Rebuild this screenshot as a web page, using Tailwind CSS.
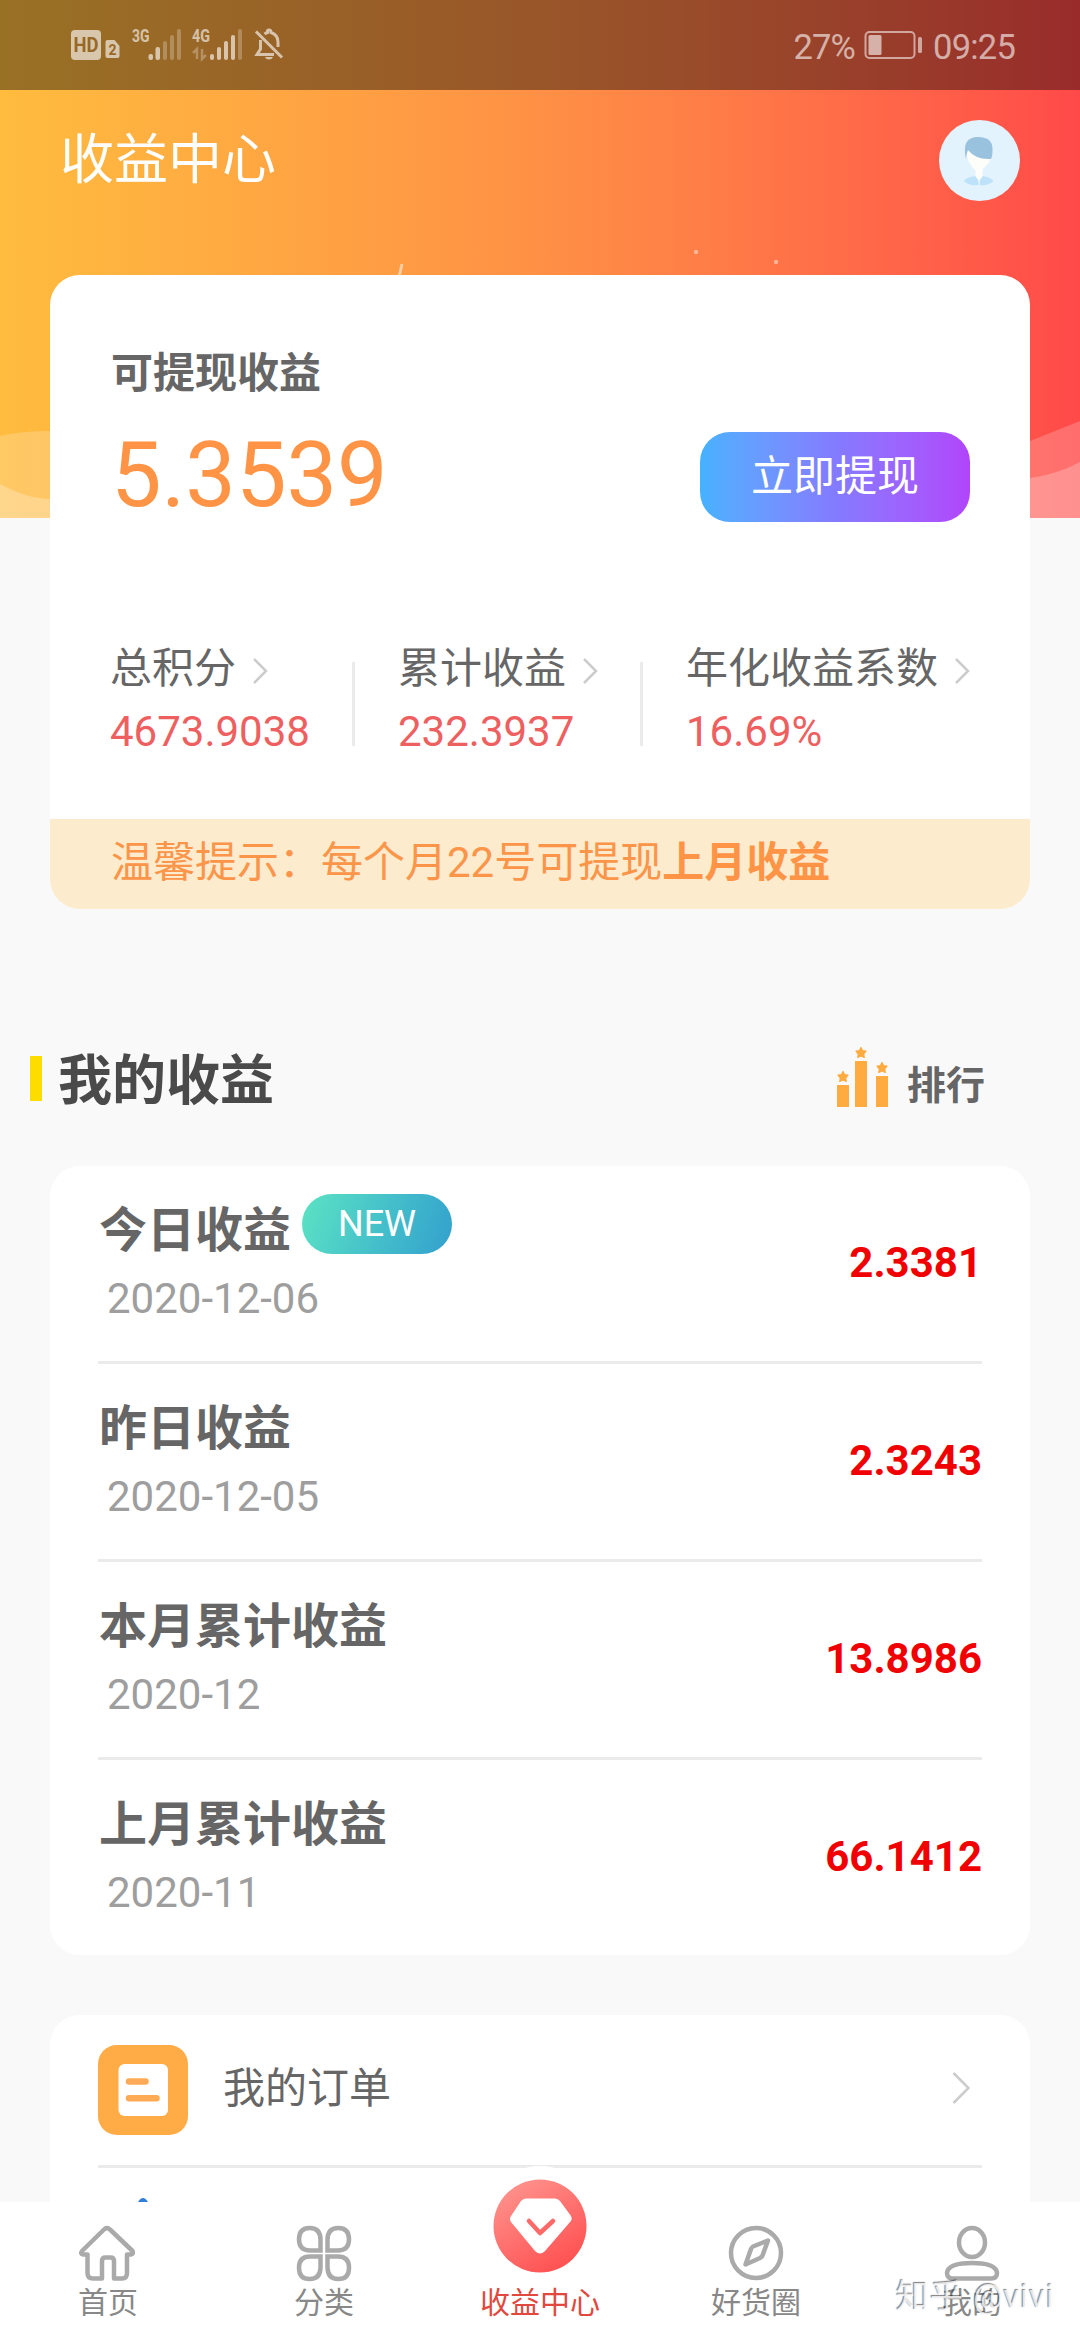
<!DOCTYPE html>
<html lang="zh-CN">
<head>
<meta charset="utf-8">
<title>收益中心</title>
<script src="https://cdn.jsdelivr.net/npm/@tailwindcss/browser@4"></script>
</head>
<body class="w-[1080px] h-[2340px] overflow-hidden bg-[#f9f9f9] font-[Roboto,'Noto_Sans_CJK_SC',sans-serif] text-[42px] leading-[60px] text-[#666]">
<div class="relative flex h-[2340px] w-[1080px] flex-col overflow-hidden">

  <!-- header backdrop -->
  <div class="absolute inset-x-0 top-0 h-[518px] bg-linear-to-r from-[#ffbc3e] via-[#ff9045] to-[#ff4949]">
    <svg class="block" width="1080" height="518" viewBox="0 0 1080 518">
      <path d="M0 436Q22 431 50 431V518H0Z" fill="#fff" fill-opacity=".2"/>
      <path d="M0 484Q28 499 50 499V518H0Z" fill="#fff" fill-opacity=".26"/>
      <path d="M1030 441L1080 421V518H1030Z" fill="#fff" fill-opacity=".2"/>
      <path d="M1030 478Q1058 474 1080 462V518H1030Z" fill="#fff" fill-opacity=".24"/>
      <path d="M402 264L399 277" stroke="#fff" stroke-opacity=".5" stroke-width="3"/>
      <circle cx="696" cy="252" r="2.2" fill="#fff" fill-opacity=".45"/>
      <circle cx="776" cy="262" r="2.2" fill="#fff" fill-opacity=".45"/>
    </svg>
  </div>

  <!-- status bar -->
  <div class="relative flex h-[90px] shrink-0 items-center justify-between bg-black/40 pl-[70px] pr-[65px]">
    <svg width="220" height="40" viewBox="70 26 220 40" fill="#fff" fill-opacity=".62">
      <path fill-rule="evenodd" d="M75 31H97Q101 31 101 35V57Q101 61 97 61H75Q71 61 71 57V35Q71 31 75 31Z"/>
      <text x="73.5" y="53" font-family="Roboto" font-size="20" font-weight="700" fill="#986826" fill-opacity="1" textLength="25" lengthAdjust="spacingAndGlyphs">HD</text>
      <path d="M107.500 41H114.500L119.500 47V57Q119.500 59 117.500 59H107.500Q105.500 59 105.500 57V43Q105.500 41 107.500 41Z"/>
      <text x="108.500" y="55.500" font-family="Roboto" font-size="14" font-weight="700" fill="#986826" fill-opacity="1">2</text>
      <text x="132" y="43" font-family="Roboto" font-size="19" font-weight="700" textLength="17.500" lengthAdjust="spacingAndGlyphs">3G</text>
      <rect x="148.500" y="55" width="4.500" height="6" rx="2"/><rect x="155.500" y="48" width="4.500" height="13" rx="2"/>
      <g fill-opacity=".25"><rect x="163" y="42" width="4" height="19" rx="2"/><rect x="170" y="36" width="4" height="25" rx="2"/><rect x="177" y="30" width="4" height="31" rx="2"/></g>
      <text x="192" y="43" font-family="Roboto" font-size="19" font-weight="700" textLength="18" lengthAdjust="spacingAndGlyphs">4G</text>
      <path d="M193 54L197 50V60M202 50V60L206 56" fill="none" stroke="#fff" stroke-opacity=".28" stroke-width="2.500"/>
      <rect x="210" y="55" width="4" height="6" rx="2"/><rect x="217" y="48" width="4" height="13" rx="2"/><rect x="224" y="42" width="4" height="19" rx="2"/><rect x="231" y="36" width="4" height="25" rx="2"/>
      <rect x="238" y="30" width="4" height="31" rx="2" fill-opacity=".25"/>
      <g fill="none" stroke="#fff" stroke-opacity=".62" stroke-width="3">
        <path d="M256 32.500L282 58.500" />
        <path d="M260.500 41V50L257 55.500H274"/>
        <path d="M264.500 35Q266 34 267.500 33.500Q267 31 269 31Q271 31 271 33.500Q278 36 278 43V48"/>
      </g>
      <path d="M265 58H273Q272 60.500 269 60.500Q266 60.500 265 58Z"/>
    </svg>
    <div class="flex items-center text-[34.5px] leading-[42px] tracking-[-0.8px] text-white/60">
      <span class="mt-[3px]">27%</span>
      <svg class="ml-[9px] mr-[9px]" width="60" height="30" viewBox="0 0 60 30"><rect x="1.500" y="2" width="49" height="26" rx="4" fill="none" stroke="#fff" stroke-opacity=".55" stroke-width="2"/><rect x="4.500" y="5" width="13" height="20" rx="1.500" fill="#fff" fill-opacity=".6"/><rect x="54" y="7" width="4" height="16" rx="1.500" fill="#fff" fill-opacity=".55"/></svg>
      <span class="mt-[3px]">09:25</span>
    </div>
  </div>

  <!-- title bar -->
  <div class="relative flex h-[185px] shrink-0 items-start justify-between pl-[60px] pr-[60px] pt-[30px]">
    <h1 class="mt-[3px] text-[54px] leading-[76px] text-white">收益中心</h1>
    <svg width="81" height="81" viewBox="0 0 81 81">
      <circle cx="40.500" cy="40.500" r="40.500" fill="#e3f3fe"/>
      <path d="M27 30Q28 42 35 49Q39 54 44 49Q52 42 52.500 34Z" fill="#fdfdfa"/>
      <path d="M36.500 47H43.500V57L40 63L36.500 57Z" fill="#fdfdfa"/>
      <path d="M27 39Q22 17 39 17Q55 17 53.500 32Q53.400 37 52 39Q37 40 29 30Q27.500 33 27 39Z" fill="#98c2de"/>
      <path d="M24.500 61Q28 57 36 56L39.500 60V65Q29 66 24.500 61ZM54.500 61Q51 57 44 56L40.800 60V65Q50 66 54.500 61Z" fill="#bfe2fb"/>
    </svg>
  </div>

  <!-- balance card -->
  <section class="relative mx-[50px] h-[634px] shrink-0 overflow-hidden rounded-[30px] bg-white">
    <div class="flex h-[375px] items-start justify-between pl-[61px] pr-[60px] pt-[67px]">
      <div class="flex flex-col">
        <h2 class="mt-[2px] font-bold">可提现收益</h2>
        <div class="mt-[19px] text-[90px] leading-[106px] text-[#ff9446]">5.3539</div>
      </div>
      <button class="mt-[90px] h-[90px] w-[270px] rounded-[30px] bg-linear-to-r from-[#45b2ff] via-[#837bff] to-[#b144fb] text-white">立即提现</button>
    </div>
    <div class="flex h-[169px] pl-[60px]">
      <div class="-mt-[11px] flex w-[288px] flex-col">
        <div class="flex items-center gap-[16px]"><span>总积分</span><svg class="mt-[4px]" width="16" height="26" viewBox="0 0 16 26" fill="none" stroke="#ccc" stroke-width="2.500"><path d="M2 1L14 13L2 25"/></svg></div>
        <div class="mt-[3px] text-[#ee5f5f]">4673.9038</div>
      </div>
      <div class="-mt-[11px] flex w-[288px] flex-col">
        <div class="flex items-center gap-[16px]"><span>累计收益</span><svg class="mt-[4px]" width="16" height="26" viewBox="0 0 16 26" fill="none" stroke="#ccc" stroke-width="2.500"><path d="M2 1L14 13L2 25"/></svg></div>
        <div class="mt-[3px] text-[#ee5f5f]">232.3937</div>
      </div>
      <div class="-mt-[11px] flex flex-col">
        <div class="flex items-center gap-[16px]"><span>年化收益系数</span><svg class="mt-[4px]" width="16" height="26" viewBox="0 0 16 26" fill="none" stroke="#ccc" stroke-width="2.500"><path d="M2 1L14 13L2 25"/></svg></div>
        <div class="mt-[3px] text-[#ee5f5f]">16.69%</div>
      </div>
    </div>
    <i class="absolute left-[302px] top-[387px] h-[84px] w-[3px] bg-[#ebebeb]"></i>
    <i class="absolute left-[590px] top-[387px] h-[84px] w-[3px] bg-[#ebebeb]"></i>
    <p class="h-[90px] bg-[#fdebce] pl-[61px] pt-[14px] text-[#fb9549]">温馨提示：每个月22号可提现<b class="text-[#ff9446]">上月收益</b></p>
  </section>

  <!-- section heading -->
  <div class="relative flex h-[257px] shrink-0 items-start pl-[30px] pr-[95px] pt-[132px]">
    <i class="mt-[15px] h-[45px] w-[12px] bg-[#fddc00]"></i>
    <h2 class="ml-[16px] mt-[3px] text-[54px] font-bold leading-[76px] text-[#4a4a4a]">我的收益</h2>
    <svg class="ml-auto mt-[6px]" width="54" height="60" viewBox="0 0 54 60" fill="#ffab40">
      <rect x="1" y="38" width="12" height="22"/><rect x="19" y="14" width="12" height="46"/><rect x="40" y="29" width="12" height="31"/>
      <path id="star" d="M25 .5L26.700 3.700L30 4.200L27.700 7L28.300 10.500L25 9L21.700 10.500L22.300 7L20 4.200L23.300 3.700Z" stroke="#ffab40" stroke-width="1.200" stroke-linejoin="round"/>
      <use href="#star" x="-18" y="24"/><use href="#star" x="21" y="15"/>
    </svg>
    <span class="ml-[17px] mt-[17px] text-[39px] font-bold leading-[56px]">排行</span>
  </div>

  <!-- earnings list -->
  <section class="relative mx-[50px] shrink-0 rounded-[30px] bg-white px-[48px]">
    <div class="flex h-[198px] items-center justify-between border-b-[3px] border-[#ebebeb]">
      <div class="flex h-full flex-col pt-[28px]">
        <div class="flex items-start"><h3 class="ml-[1px] mt-[3px] text-[48px] font-bold leading-[68px]">今日收益</h3><span class="ml-[11px] h-[60px] w-[150px] rounded-full bg-linear-110 from-[#5ce3c3] to-[#33a0cd] text-center text-[36px] leading-[60px] text-white">NEW</span></div>
        <div class="ml-[9px] mt-[4px] text-[#9e9e9e]">2020-12-06</div>
      </div>
      <b class="-mt-[2px] text-[#f00000]">2.3381</b>
    </div>
    <div class="flex h-[198px] items-center justify-between border-b-[3px] border-[#ebebeb]">
      <div class="flex h-full flex-col pt-[28px]">
        <h3 class="ml-[1px] mt-[3px] text-[48px] font-bold leading-[68px]">昨日收益</h3>
        <div class="ml-[9px] mt-[4px] text-[#9e9e9e]">2020-12-05</div>
      </div>
      <b class="-mt-[2px] text-[#f00000]">2.3243</b>
    </div>
    <div class="flex h-[198px] items-center justify-between border-b-[3px] border-[#ebebeb]">
      <div class="flex h-full flex-col pt-[28px]">
        <h3 class="ml-[1px] mt-[3px] text-[48px] font-bold leading-[68px]">本月累计收益</h3>
        <div class="ml-[9px] mt-[4px] text-[#9e9e9e]">2020-12</div>
      </div>
      <b class="-mt-[2px] text-[#f00000]">13.8986</b>
    </div>
    <div class="flex h-[195px] items-center justify-between">
      <div class="flex h-full flex-col pt-[28px]">
        <h3 class="ml-[1px] mt-[3px] text-[48px] font-bold leading-[68px]">上月累计收益</h3>
        <div class="ml-[9px] mt-[4px] text-[#9e9e9e]">2020-11</div>
      </div>
      <b class="-mt-[2px] text-[#f00000]">66.1412</b>
    </div>
  </section>

  <!-- menu list -->
  <section class="relative mx-[50px] mt-[60px] h-[187px] shrink-0 overflow-hidden rounded-t-[30px] bg-white px-[48px]">
    <div class="flex h-[153px] items-center border-b-[3px] border-[#ebebeb]">
      <svg width="90" height="90" viewBox="0 0 90 90"><rect width="90" height="90" rx="19" fill="#ffab46"/><rect x="20.500" y="19" width="49.500" height="52" rx="6" fill="#fff"/><path d="M31 36.500H47.500M31 53.300H58.500" stroke="#ffab55" stroke-width="6.500" stroke-linecap="round"/></svg>
      <span class="-mt-[2px] ml-[35px]">我的订单</span>
      <svg class="-mt-[5px] ml-auto mr-[12px]" width="18" height="32" viewBox="0 0 18 32" fill="none" stroke="#ccc" stroke-width="2.500"><path d="M1.500 1L16.500 16L1.500 31"/></svg>
    </div>
    <svg class="ml-[40px] mt-[30px] block" width="10" height="4" viewBox="0 0 10 4"><path d="M0 4Q5 -4 10 4Z" fill="#2f7fd6"/></svg>
  </section>

  <!-- tab bar -->
  <nav class="relative grid h-[138px] shrink-0 grid-cols-5 bg-white text-center text-[30px] leading-[44px] text-[#888]">
    <a class="flex flex-col items-center pt-[22px]">
      <svg width="60" height="58" viewBox="0 0 60 58" fill="none" stroke="#aaa" stroke-width="4.500" stroke-linejoin="round"><path d="M26 5.500Q29 2.500 32 5.500L54.500 27Q56 30 53 30.500H49V49Q49 54.500 44 54.500H36V37Q36 33.500 32.500 33.500H27.500Q24 33.500 24 37V54.500H15Q9.500 54.500 9.500 49V30.500H5Q2 30 4 27Z"/></svg>
      <span class="-mt-px">首页</span>
    </a>
    <a class="flex flex-col items-center pt-[22px]">
      <svg width="60" height="58" viewBox="0 0 60 58" fill="none" stroke="#aaa" stroke-width="4.500"><path id="leaf" d="M26.500 26.500V16Q26.500 4 15.800 4Q5 4 5 15.300Q5 26.500 16 26.500Z"/><use href="#leaf" transform="matrix(-1 0 0 1 60 0)"/><use href="#leaf" transform="matrix(1 0 0 -1 0 59)"/><use href="#leaf" transform="matrix(-1 0 0 -1 60 59)"/></svg>
      <span class="-mt-px">分类</span>
    </a>
    <a class="-mt-[36px] flex flex-col items-center text-[#e1483e]">
      <svg width="120" height="116" viewBox="0 0 120 116">
        <defs><linearGradient id="gem" x1="0" y1="0" x2=".6" y2="1"><stop offset="0" stop-color="#ff9a94"/><stop offset="1" stop-color="#ff5353"/></linearGradient></defs>
        <circle cx="60" cy="60" r="60" fill="#fff"/><circle cx="60" cy="60" r="46.500" fill="url(#gem)"/>
        <path d="M46 32.500H75Q78 32.500 80 35L91 50Q92.500 53 90.500 55.500L65 85Q60 90 55 85L31 56Q29 53 31 50L41 35Q43 32.500 46 32.500Z" fill="#fff"/>
        <path d="M49 55L60 67L73 55" fill="none" stroke="#ff6a68" stroke-width="4.500" stroke-linecap="round" stroke-linejoin="round"/>
      </svg>
      <span class="-mt-px">收益中心</span>
    </a>
    <a class="flex flex-col items-center pt-[22px]">
      <svg width="60" height="58" viewBox="0 0 60 58" fill="none" stroke="#aaa" stroke-width="4.500" stroke-linejoin="round"><circle cx="30" cy="29" r="25"/><path d="M42 16.500L27 22.500Q25.500 23.500 25 25L19.500 40.500L34 34Q36 33 36.500 31.500Z"/></svg>
      <span class="-mt-px">好货圈</span>
    </a>
    <a class="flex flex-col items-center pt-[22px]">
      <svg width="60" height="58" viewBox="0 0 60 58" fill="none" stroke="#aaa" stroke-width="4.500"><ellipse cx="30" cy="18.500" rx="13" ry="14.500"/><path d="M5 49Q6 39 30 39Q54 39 55 49Q55 54.500 49 54.500H11Q5 54.500 5 49Z"/></svg>
      <span class="-mt-px">我的</span>
    </a>
  </nav>

  <div class="absolute left-[896px] top-[2274px] whitespace-nowrap text-[33px] leading-[46px] tracking-[0.9px] text-white/80 [text-shadow:-1px_-1px_1px_rgba(0,0,0,0.5)]">知乎 @vivi</div>
</div>
</body>
</html>
